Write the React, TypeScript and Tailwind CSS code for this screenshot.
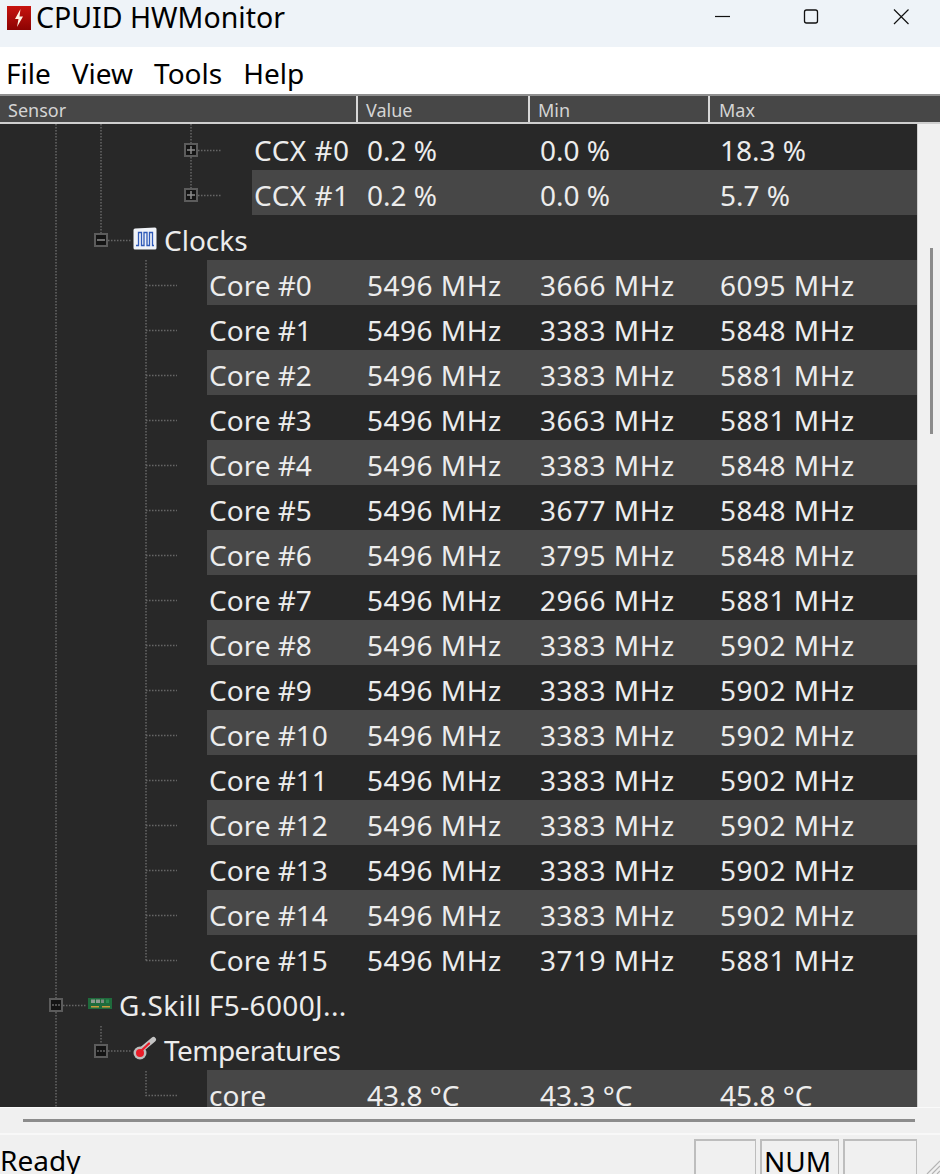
import React from "react";

const font = "font-['Noto_Sans','Open_Sans',sans-serif]";

type Row = {
  name: string;
  indent: "ccx" | "core" | "group" | "device";
  band?: boolean;
  value?: string;
  min?: string;
  max?: string;
  icon?: "clocks" | "ram" | "temp";
  track?: string;
};

const indents = {
  ccx: "w-[252px]",
  core: "w-[207px]",
  group: "w-[162px]",
  device: "w-[117px]",
};

const coreMin = ["3666", "3383", "3383", "3663", "3383", "3677", "3795", "2966", "3383", "3383", "3383", "3383", "3383", "3383", "3383", "3719"];
const coreMax = ["6095", "5848", "5881", "5881", "5848", "5848", "5848", "5881", "5902", "5902", "5902", "5902", "5902", "5902", "5902", "5881"];

const rows: Row[] = [
  { name: "CCX #0", indent: "ccx", track: "tracking-[0.5px]", value: "0.2 %", min: "0.0 %", max: "18.3 %" },
  { name: "CCX #1", indent: "ccx", track: "tracking-[0.5px]", band: true, value: "0.2 %", min: "0.0 %", max: "5.7 %" },
  { name: "Clocks", indent: "group", icon: "clocks" },
  ...coreMin.map((min, i) => ({
    name: `Core #${i}`,
    indent: "core" as const,
    band: i % 2 === 0,
    value: "5496 MHz",
    min: `${min} MHz`,
    max: `${coreMax[i]} MHz`,
  })),
  { name: "G.Skill F5-6000J...", indent: "device", icon: "ram", track: "tracking-[0.35px]" },
  { name: "Temperatures", indent: "group", icon: "temp", track: "tracking-[-0.55px]" },
  { name: "core", indent: "core", band: true, value: "43.8 °C", min: "43.3 °C", max: "45.8 °C" },
];

function ClocksIcon() {
  return (
    <svg width="24" height="23" viewBox="0 0 24 23" className="absolute left-[-29px] top-[6px]">
      <path d="M2 1.500 L22 0.500 Q23.500 0.500 23.500 2 L23.500 21 Q23.500 22.500 22 22.500 L2 22.500 Q0.500 22.500 0.500 21 L0.500 3 Q0.500 1.500 2 1.500Z" fill="#f0f3f8" />
      <path d="M3 18.500 H5.500 V5.500 H8.500 V18.500 H11 V5.500 H14 V18.500 H16.500 V5.500 H19.500 V18.500 H21" fill="none" stroke="#2f5ab8" strokeWidth="1.300" />
    </svg>
  );
}

function RamIcon() {
  return (
    <svg width="24" height="12" viewBox="0 0 24 12" className="absolute left-[-29px] top-[12px]">
      <rect width="24" height="11" fill="#1f6b3c" />
      <rect x="3" y="1.500" width="4" height="3.500" fill="#8d9a90" />
      <rect x="8" y="1.500" width="4" height="3.500" fill="#8d9a90" />
      <rect x="13" y="1.500" width="3" height="3.500" fill="#7c8c80" />
      <rect x="18" y="1.500" width="3" height="3.500" fill="#2d8a50" />
      <rect x="3" y="8" width="8" height="1.500" fill="#c99a3c" />
      <rect x="14" y="8" width="8" height="1.500" fill="#c99a3c" />
    </svg>
  );
}

function TempIcon() {
  return (
    <svg width="24" height="24" viewBox="0 0 24 24" className="absolute left-[-29px] top-[5px]">
      <path d="M8 14 L20.500 3.500" stroke="#c4c4c4" strokeWidth="5" strokeLinecap="round" />
      <circle cx="7" cy="17" r="6.500" fill="#bdbdbd" />
      <circle cx="7" cy="17" r="4" fill="#ea1c28" />
      <path d="M8 15 L16 7.500" stroke="#ea1c28" strokeWidth="2.200" strokeLinecap="round" />
    </svg>
  );
}

function SensorRow({ row }: { row: Row }) {
  const numTrack = row.value?.endsWith("MHz") ? "tracking-[0.5px]" : "";
  return (
    <div className="flex h-[45px] shrink-0">
      <div className={`${indents[row.indent]} shrink-0`} />
      <div className={`flex min-w-0 flex-1 pt-[6px] leading-[39px] ${row.band ? "bg-[#474747]" : ""}`}>
        <div className={`relative min-w-0 flex-1 whitespace-nowrap pl-[2px] ${row.track ?? ""}`}>
          {row.icon === "clocks" && <ClocksIcon />}
          {row.icon === "ram" && <RamIcon />}
          {row.icon === "temp" && <TempIcon />}
          {row.name}
        </div>
        {row.value && (
          <>
            <div className={`w-[173px] shrink-0 whitespace-nowrap ${numTrack}`}>{row.value}</div>
            <div className={`w-[180px] shrink-0 whitespace-nowrap ${numTrack}`}>{row.min}</div>
            <div className={`w-[197px] shrink-0 whitespace-nowrap ${numTrack}`}>{row.max}</div>
          </>
        )}
      </div>
    </div>
  );
}

function TreeBox({ x, y, plus, dashed }: { x: number; y: number; plus?: boolean; dashed?: boolean }) {
  return (
    <g>
      <rect x={x - 6} y={y - 6} width="12" height="12" fill="#141414" stroke="#5c5c5c" strokeWidth="2" />
      <path
        d={`M${x - 4} ${y}H${x + 4}`}
        stroke="#8c8c8c"
        strokeWidth={dashed ? 1 : 1.5}
        strokeDasharray={dashed ? "2 1" : undefined}
      />
      {plus && <path d={`M${x} ${y - 4}V${y + 4}`} stroke="#8c8c8c" strokeWidth="1.5" />}
    </g>
  );
}

// connector lines of the tree, in the coordinates of the list panel
function TreeLines() {
  const lines = [
    "M56 0V983",
    "M101 0V109",
    "M191 0V71",
    "M108 116.5H132",
    "M198 26.5H222",
    "M198 71.5H222",
    "M146 136V836.5",
    ...coreMin.map((_, i) => `M146 ${161.5 + i * 45}H177`),
    "M63 881.5H87",
    "M101 902V920",
    "M108 927H132",
    "M146 947V971.5H177",
  ];
  return (
    <svg width="260" height="983" className="pointer-events-none absolute left-0 top-0">
      {lines.map((d) => (
        <path key={d} d={d} stroke="#666666" strokeWidth="1.500" strokeDasharray="1.500 1.500" fill="none" />
      ))}
      <TreeBox x={191} y={26} plus />
      <TreeBox x={191} y={71} plus />
      <TreeBox x={101} y={116} />
      <TreeBox x={56} y={881} dashed />
      <TreeBox x={101} y={927} dashed />
    </svg>
  );
}

function AppIcon() {
  return (
    <svg width="24" height="24" viewBox="0 0 24 24">
      <defs>
        <linearGradient id="appRed" x1="0" y1="0" x2="0" y2="1">
          <stop offset="0" stopColor="#c8140f" />
          <stop offset="1" stopColor="#8c0303" />
        </linearGradient>
      </defs>
      <rect width="24" height="24" fill="url(#appRed)" />
      <path d="M13.500 3 L8 13 H11.500 L10 21 L16 10.500 H12.500 Z" fill="#fff4e4" />
    </svg>
  );
}

export default function App() {
  return (
    <div className={`relative flex h-[1174px] w-[940px] flex-col overflow-hidden bg-[#f0f0f0] text-black ${font}`}>
      <div className="flex h-[47px] shrink-0 items-center bg-[#eef3f8] pb-[12px] pl-[7px]">
        <AppIcon />
        <span className="ml-[5px] whitespace-nowrap text-[28.5px] leading-[35px]">CPUID HWMonitor</span>
        <svg width="194" height="24" viewBox="0 0 194 24" className="ml-auto mr-[31px]">
          <path d="M0 10.500H15" stroke="#111" strokeWidth="1.200" />
          <rect x="89.500" y="4" width="13" height="13" rx="2" fill="none" stroke="#111" strokeWidth="1.300" />
          <path d="M179 3.500L193.500 18M193.500 3.500L179 18" stroke="#111" strokeWidth="1.200" />
        </svg>
      </div>

      <div className="flex h-[47px] shrink-0 items-center gap-[21px] bg-white pl-[6px] pt-[5px] text-[28px]">
        <span>File</span>
        <span>View</span>
        <span>Tools</span>
        <span>Help</span>
      </div>

      <div className="flex h-[30px] shrink-0 border-y-2 border-t-[#8f8f8f] border-b-[#cfcfcf] bg-[#474747] text-[18px] leading-[29px] text-[#d4d4d4]">
        <div className="w-[358px] border-r-2 border-[#d8d8d8] pl-[8px]">Sensor</div>
        <div className="w-[172px] border-r-2 border-[#d8d8d8] pl-[8px]">Value</div>
        <div className="w-[180px] border-r-2 border-[#d8d8d8] pl-[8px]">Min</div>
        <div className="flex-1 pl-[9px]">Max</div>
      </div>

      <div className="flex h-[983px] shrink-0">
        <div className="relative w-[917px] shrink-0 overflow-hidden bg-[#282828] pt-px text-[28px] text-[#ececec]">
          <TreeLines />
          <div className="flex flex-col">
            {rows.map((row) => (
              <SensorRow key={row.name} row={row} />
            ))}
          </div>
        </div>
        <div className="flex-1 border-l border-[#d0d0d0] pl-[12px] pt-[124px]">
          <div className="h-[186px] w-[3px] bg-[#8c8c8c]" />
        </div>
      </div>

      <div className="flex h-[26px] shrink-0 items-center border-t border-[#fafafa] pl-[23px] pr-[25px]">
        <div className="h-[3px] w-full bg-[#8c8c8c]" />
      </div>

      <div className="flex h-[41px] shrink-0 items-start border-t-2 border-[#f8f8f8] pt-[4px] text-[28px]">
        <span className="leading-[42px]">Ready</span>
        <div className="ml-auto mr-[23px] flex gap-[4px] leading-[40px]">
          <div className="h-[40px] w-[62px] border-l-2 border-r border-t-2 border-[#bdbdbd]" />
          <div className="h-[40px] w-[79px] border-l-2 border-r border-t-2 border-[#bdbdbd] pl-[2px]">NUM</div>
          <div className="h-[40px] w-[74px] border-l-2 border-r border-t-2 border-[#bdbdbd]" />
        </div>
      </div>

      <svg width="15" height="15" viewBox="0 0 15 15" className="absolute bottom-0 right-0">
        <path d="M15 2L2 15M15 7L7 15M15 12L12 15" stroke="#b4b4b4" strokeWidth="1.200" />
      </svg>
    </div>
  );
}
